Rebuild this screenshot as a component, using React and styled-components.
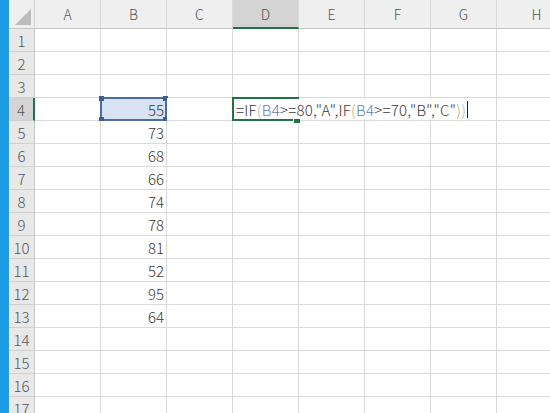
import styled, { createGlobalStyle } from 'styled-components';

const GlobalStyle = createGlobalStyle`
  html, body {
    margin: 0;
    padding: 0;
    background: #ffffff;
    overflow: hidden;
  }
`;

const COLS = ['A', 'B', 'C', 'D', 'E', 'F', 'G', 'H'];
const VALUES = { 4: 55, 5: 73, 6: 68, 7: 66, 8: 74, 9: 78, 10: 81, 11: 52, 12: 95, 13: 64 };
const ROWS = Array.from({ length: 17 }, (_, i) => i + 1);

const GREEN = '#217346';

const Frame = styled.div`
  display: flex;
  width: 550px;
  height: 413px;
  overflow: hidden;
  font-family: 'Noto Sans CJK JP', 'Open Sans', sans-serif;
`;

// blue window edge on the left
const Strip = styled.div`
  width: 9px;
  flex-shrink: 0;
  background: #1b9ee3;
`;

const Sheet = styled.div`
  display: grid;
  grid-template-columns: 26px repeat(7, 66px) 80px;
  grid-template-rows: 29px repeat(17, 23px);
  flex-shrink: 0;
`;

const Corner = styled.div`
  position: relative;
  background: #efefef;
  border-right: 1px solid #d0d0d0;
  border-bottom: 1px solid #c6c6c6;
  box-sizing: border-box;

  &::after {
    content: '';
    position: absolute;
    right: 3px;
    bottom: 3px;
    border-style: solid;
    border-width: 0 0 16px 16px;
    border-color: transparent transparent #bcbcbc transparent;
  }
`;

const ColHead = styled.div`
  display: flex;
  align-items: center;
  justify-content: center;
  box-sizing: border-box;
  background: ${(p) => (p.$active ? '#d4d4d4' : '#efefef')};
  border-right: 1px solid #d8d8d8;
  border-bottom: ${(p) => (p.$active ? `2px solid ${GREEN}` : '1px solid #c6c6c6')};
  color: #555;
  font-size: 14px;
  font-weight: 300;
  padding-top: ${(p) => (p.$active ? '1px' : '0')};
`;

const RowHead = styled.div`
  display: flex;
  align-items: center;
  justify-content: center;
  box-sizing: border-box;
  background: ${(p) => (p.$active ? '#d4d4d4' : '#e8e8e8')};
  border-bottom: 1px solid #d0d0d0;
  border-right: ${(p) => (p.$active ? `2px solid ${GREEN}` : '1px solid #c6c6c6')};
  color: #555;
  font-size: 15px;
  font-weight: 300;
`;

const Cell = styled.div`
  position: relative;
  display: flex;
  align-items: center;
  justify-content: flex-end;
  box-sizing: border-box;
  padding-right: 2px;
  border-right: 1px solid #dadada;
  border-bottom: 1px solid #dadada;
  color: #3a3a3a;
  font-size: 15px;
  font-weight: 300;
  background: ${(p) => (p.$ref ? '#d9e2f2' : '#ffffff')};
`;

const RefBox = styled.div`
  position: absolute;
  left: -1px;
  top: -1px;
  right: -1px;
  bottom: -1px;
  border: 2px solid #4a6da3;
  pointer-events: none;
`;

const Handle = styled.span`
  position: absolute;
  width: 5px;
  height: 5px;
  background: #3f5f91;
  ${(p) => (p.$top ? 'top: -3px;' : 'bottom: -3px;')}
  ${(p) => (p.$left ? 'left: -3px;' : 'right: -3px;')}
`;

const ActiveBox = styled.div`
  position: absolute;
  left: -1px;
  top: -1px;
  right: -1px;
  bottom: -1px;
  border: 2px solid ${GREEN};
  z-index: 1;
`;

const FillHandle = styled.span`
  position: absolute;
  right: -3px;
  bottom: -4px;
  width: 6px;
  height: 4px;
  background: ${GREEN};
  border-top: 1px solid #fff;
  border-left: 1px solid #fff;
`;

// in-cell editor, spills over the cells to the right
const Editor = styled.div`
  position: absolute;
  left: 1px;
  top: 1px;
  bottom: 1px;
  z-index: 2;
  display: flex;
  align-items: center;
  padding: 0 3px 0 2px;
  background: #ffffff;
  white-space: nowrap;
  color: #3a3a3a;
  font-size: 15px;
  font-weight: 300;
  letter-spacing: 0.25px;
`;

const Tok = styled.span`
  color: ${(p) => p.$c || '#3a3a3a'};
`;

const Caret = styled.span`
  display: inline-block;
  width: 1px;
  height: 17px;
  margin-left: 1px;
  background: #222;
`;

const OUTER = '#a8b3ad';
const INNER = '#c9a27f';
const REF = '#5b7eb6';

function Formula() {
  return (
    <Editor>
      <Tok>=IF</Tok>
      <Tok $c={OUTER}>(</Tok>
      <Tok $c={REF}>B4</Tok>
      <Tok>&gt;=80,"A",IF</Tok>
      <Tok $c={INNER}>(</Tok>
      <Tok $c={REF}>B4</Tok>
      <Tok>&gt;=70,"B","C"</Tok>
      <Tok $c={INNER}>)</Tok>
      <Tok $c={OUTER}>)</Tok>
      <Caret />
    </Editor>
  );
}

export default function App() {
  return (
    <>
      <GlobalStyle />
      <Frame>
        <Strip />
        <Sheet>
          <Corner />
          {COLS.map((c) => (
            <ColHead key={c} $active={c === 'D'}>
              {c}
            </ColHead>
          ))}
          {ROWS.map((r) => [
            <RowHead key={`h${r}`} $active={r === 4}>
              {r}
            </RowHead>,
            ...COLS.map((c) => {
              const isRef = c === 'B' && r === 4;
              const isActive = c === 'D' && r === 4;
              return (
                <Cell key={`${c}${r}`} $ref={isRef}>
                  {c === 'B' && VALUES[r]}
                  {isRef && (
                    <RefBox>
                      <Handle $top $left />
                      <Handle $top />
                      <Handle $left />
                      <Handle />
                    </RefBox>
                  )}
                  {isActive && (
                    <>
                      <ActiveBox>
                        <FillHandle />
                      </ActiveBox>
                      <Formula />
                    </>
                  )}
                </Cell>
              );
            }),
          ])}
        </Sheet>
      </Frame>
    </>
  );
}
